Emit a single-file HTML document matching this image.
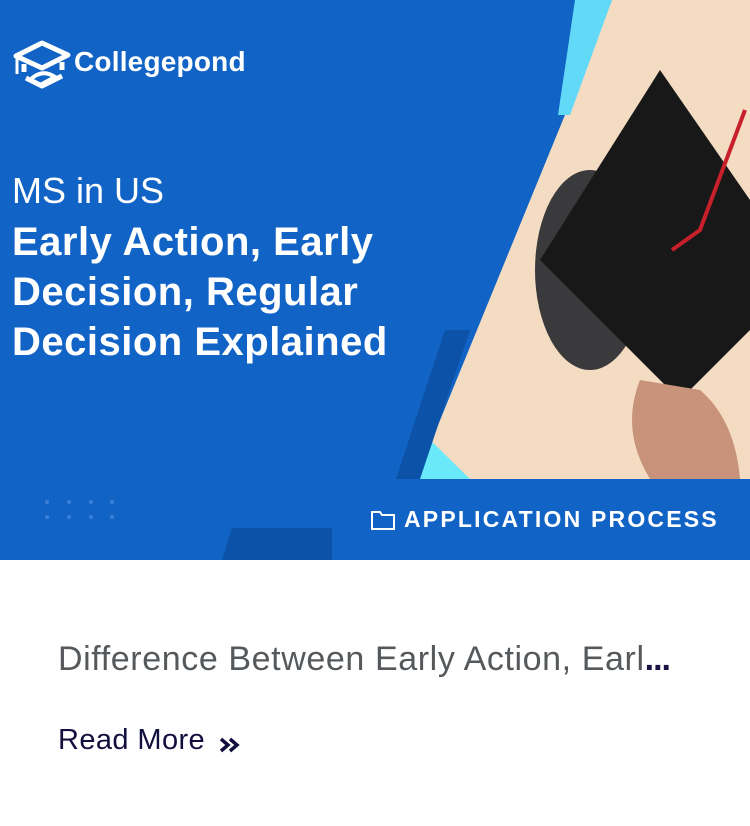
<!DOCTYPE html>
<html><head><meta charset="utf-8"><style>
*{margin:0;padding:0;box-sizing:border-box}
body{width:750px;height:826px;background:#fff;font-family:"Liberation Sans",sans-serif;overflow:hidden;position:relative}
.img{position:absolute;left:0;top:0;width:750px;height:560px;background:#1163c6;overflow:hidden}
.t{position:absolute;color:#fff;white-space:nowrap}
</style></head><body>
<div class="img">
<svg width="750" height="560" style="position:absolute;left:0;top:0">
<polygon points="612,0 750,0 750,479 416,479" fill="#f4dcc2"/>
<polygon points="575,0 612,0 570,115 558,115" fill="#63d9f8"/>
<polygon points="420,430 470,479 410,479" fill="#6ae9fb"/>
<polygon points="445,330 470,330 420,479 396,479" fill="#0b52a8"/>
<polygon points="232,528 332,528 332,560 222,560" fill="#0b52a8"/>
<ellipse cx="590" cy="270" rx="55" ry="100" fill="#3a3a3c"/>
<polygon points="660,70 750,200 750,330 680,400 540,260" fill="#181818"/>
<path d="M745,110 L700,230 L672,250" stroke="#c8202a" stroke-width="4" fill="none"/>
<path d="M640,380 Q620,430 650,479 L740,479 Q735,420 700,390 Z" fill="#c9927a"/>
<g fill="#3b7fd6"><circle cx="47" cy="502" r="2"/><circle cx="69" cy="502" r="2"/><circle cx="91" cy="502" r="2"/><circle cx="112" cy="502" r="2"/><circle cx="47" cy="517" r="2"/><circle cx="69" cy="517" r="2"/><circle cx="91" cy="517" r="2"/><circle cx="112" cy="517" r="2"/></g>
<g fill="none" stroke="#fff" stroke-width="5" stroke-linejoin="round">
<path d="M16,56 L42,43 L68,55 L42,68 Z"/>
<path d="M24,64 L24,72 M62,62 L62,70 M26,78 L42,86 L62,76"/>
</g>
<path d="M30,80 Q42,68 55,77 L40,85" stroke="#fff" stroke-width="4" fill="none"/>
<line x1="17" y1="58" x2="17" y2="74" stroke="#fff" stroke-width="3"/>
</svg>
<div class="t" style="left:74px;top:46px;font-size:28px;font-weight:bold;letter-spacing:0.2px">Collegepond</div>
<div class="t" style="left:12px;top:170px;font-size:36px;letter-spacing:0">MS in US</div>
<div class="t" style="left:12px;top:217px;font-size:40px;font-weight:bold;line-height:50px;letter-spacing:0.5px">Early Action, Early<br>Decision, Regular<br>Decision Explained</div>
<div style="position:absolute;left:332px;top:479px;width:418px;height:81px;background:#1163c6"></div>
<svg width="26" height="22" style="position:absolute;left:370px;top:509px" viewBox="0 0 26 22"><path d="M2,3 H10 L12,6 H24 V20 H2 Z" fill="none" stroke="#fff" stroke-width="2"/></svg>
<div class="t" style="left:404px;top:506px;font-size:23px;font-weight:bold;letter-spacing:2.2px">APPLICATION PROCESS</div>
</div>
<div style="position:absolute;left:58px;top:640px;font-size:34px;color:#55595c;white-space:nowrap;letter-spacing:0.6px">Difference Between Early Action, Earl<span style="color:#1a1446;font-weight:bold;letter-spacing:-1px">...</span></div>
<div style="position:absolute;left:58px;top:724px;font-size:29px;color:#120f3e;white-space:nowrap;letter-spacing:0.4px">Read More</div>
<svg width="24" height="20" style="position:absolute;left:218px;top:735px" viewBox="0 0 24 20"><path d="M3,4 L10,10 L3,16 M12,4 L19,10 L12,16" fill="none" stroke="#120f3e" stroke-width="3.5"/></svg>
</body></html>
